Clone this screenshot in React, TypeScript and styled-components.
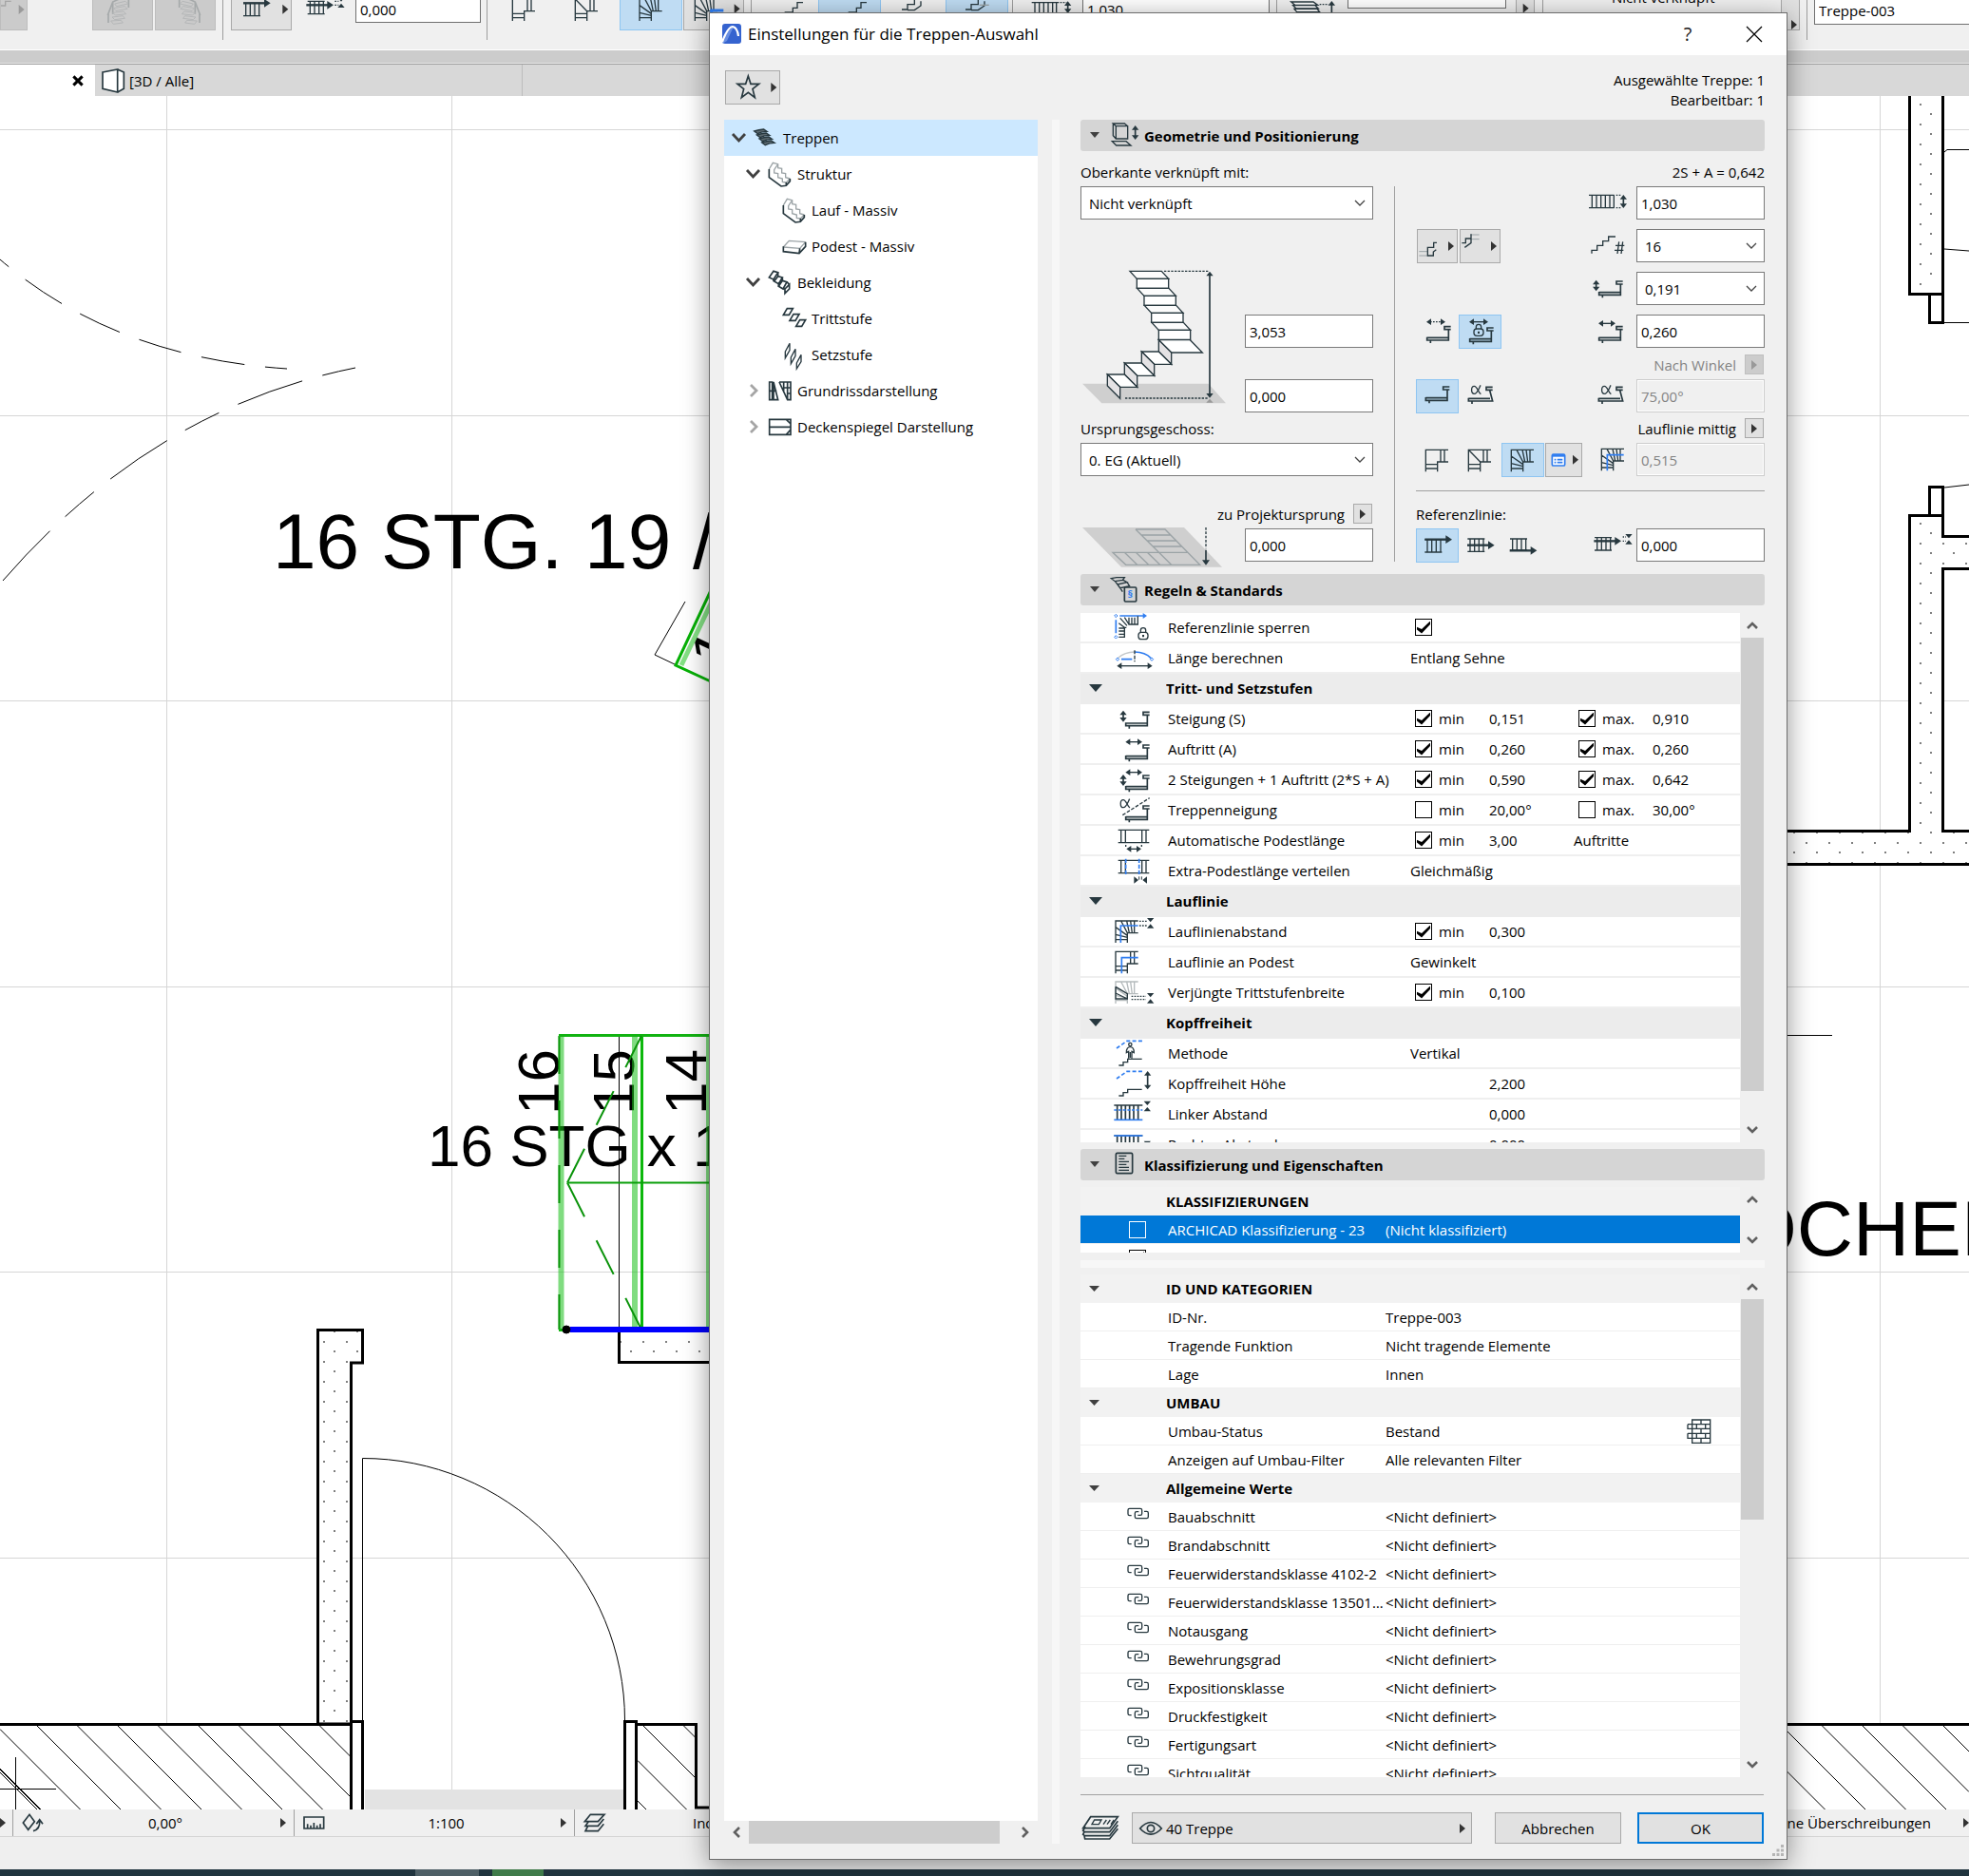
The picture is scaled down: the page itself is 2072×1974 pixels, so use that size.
import React from "react";
import styled, { createGlobalStyle, css } from "styled-components";

const INK = "#27383f";
const BLUE = "#2f7df0";
const GREY = "#9ba3a6";

const Global = createGlobalStyle`
  *, *::before, *::after { box-sizing: border-box; }
  body { margin: 0; overflow: hidden; }
  body, button, input, select, table {
    font-family: "Open Sans", "Noto Sans", sans-serif;
    font-size: 15px;
    line-height: 20px;
    color: #000;
  }
`;

/* ---------- drawing helpers ---------- */

type StrokeProps = { d: string; c?: string; w?: number; dash?: string; fill?: string };
const S = ({ d, c = INK, w = 4, dash, fill = "none" }: StrokeProps) => (
  <path d={d} stroke={c} strokeWidth={w} strokeDasharray={dash} fill={fill} />
);
const F = ({ d, c = INK }: { d: string; c?: string }) => <path d={d} fill={c} />;

const ArrowH = ({ x1, x2, y, dash }: { x1: number; x2: number; y: number; dash?: string }) => (
  <>
    <S d={`M${x1 + 12} ${y}H${x2 - 12}`} dash={dash} />
    <F d={`M${x1} ${y}l15-10v20zM${x2} ${y}l-15-10v20z`} />
  </>
);
const ArrowV = ({ x, y1, y2 }: { x: number; y1: number; y2: number }) => (
  <>
    <S d={`M${x} ${y1 + 10}V${y2 - 10}`} w={5} />
    <F d={`M${x} ${y1}l-11 14h22zM${x} ${y2}l-11-14h22z`} />
  </>
);
const Squeeze = ({ x, y }: { x: number; y: number }) => (
  <F d={`M${x - 11} ${y}h22l-11 13zM${x - 11} ${y + 32}h22l-11-13z`} />
);
const Step = ({ x, y }: { x: number; y: number }) => (
  <S w={5} d={`M${x} ${y}h66M${x} ${y - 2}v10h68v-34M${x + 75} ${y - 26}h-20v-9h20M${x + 11} ${y + 8}v9`} />
);
const SlantStep = ({ x, y }: { x: number; y: number }) => (
  <S w={5} d={`M${x} ${y}h68M${x} ${y - 2}v10h76l-9-34M${x + 76} ${y - 27}h-20v-9h20M${x + 11} ${y + 8}v9`} />
);
const Alpha = ({ x, y }: { x: number; y: number }) => (
  <S d={`M${x + 30} ${y}c-6 12-10 27-20 27c-11 0-11-24 0-24c10 0 12 20 21 25`} />
);
const Lock = ({ x, y }: { x: number; y: number }) => (
  <>
    <S d={`M${x + 7} ${y + 14}v-6a8 8 0 0 1 16 0v6`} />
    <rect x={x} y={y + 14} width={30} height={22} rx={9} fill="none" stroke={INK} strokeWidth={4} />
    <F d={`M${x + 12} ${y + 22}h6v7h-6z`} />
  </>
);
const Corner = ({ x, y, c = INK }: { x: number; y: number; c?: string }) => (
  <S
    c={c}
    d={`M${x} ${y + 69}V${y}H${x + 71}M${x + 37} ${y + 69}V${y + 38}H${x + 71}M${x} ${y + 46}h37M${x} ${y + 59}h37M${x + 47} ${y}v38M${x + 59} ${y}v38`}
  />
);
const Fan = ({ x, y, c = INK }: { x: number; y: number; c?: string }) => (
  <S
    c={c}
    d={`M${x} ${y + 69}V${y}H${x + 71}M${x + 37} ${y + 69}V${y + 38}H${x + 71}M${x} ${y + 59}h37M${x + 59} ${y}v38M${x + 37} ${y + 52}L${x} ${y + 43}M${x + 37} ${y + 46}L${x} ${y + 20}M${x + 37} ${y + 38}L${x + 17} ${y}M${x + 43} ${y + 38}L${x + 35} ${y}M${x + 52} ${y + 38}L${x + 47} ${y}`}
  />
);
const Ladder = ({ x, y, w = 54, h = 40 }: { x: number; y: number; w?: number; h?: number }) => (
  <S
    d={`M${x} ${y}h${w}M${x} ${y + h}h${w}M${x + 8} ${y}v${h}M${x + 22} ${y}v${h}M${x + 36} ${y}v${h}M${x + 50} ${y}v${h}`}
  />
);
const RefArrow = ({ x, y }: { x: number; y: number }) => (
  <>
    <S d={`M${x} ${y}h72`} w={7} />
    <F d={`M${x + 66} ${y - 13}l20 13l-20 13z`} />
  </>
);
const Right = ({ x, y, c = "#333" }: { x: number; y: number; c?: string }) => (
  <F c={c} d={`M${x} ${y - 15}l18 15l-18 15z`} />
);

/* Icons are drawn on a grid of three units to the pixel. */
const Glyph = styled.svg<{ $w: number; $h: number }>`
  display: block;
  flex: none;
  width: ${(p) => p.$w}px;
  height: ${(p) => p.$h}px;
  fill: none;
  overflow: visible;
`;
const Icon = ({ x, y, w, h, children }: { x: number; y: number; w: number; h: number; children: React.ReactNode }) => (
  <Glyph $w={w} $h={h} viewBox={`${x} ${y} ${w * 3} ${h * 3}`} aria-hidden="true">
    {children}
  </Glyph>
);

/* ---------- main window ---------- */

const Desktop = styled.div`
  position: relative;
  display: flex;
  flex-direction: column;
  height: 100vh;
  overflow: hidden;
  background: #f0f0f0;
`;
const Toolbar = styled.div`
  display: flex;
  align-items: flex-start;
  flex: none;
  height: 52px;
  overflow: hidden;
`;
const Slot = styled.div<{ $w: number; $gap?: number }>`
  flex: none;
  width: ${(p) => p.$w}px;
  margin-left: ${(p) => p.$gap ?? 0}px;
`;
const BarButton = styled.button<{ $w: number; $gap?: number; $tone?: "on" | "off" | "flat" }>`
  display: flex;
  flex: none;
  padding: 0;
  height: 32px;
  width: ${(p) => p.$w}px;
  margin-left: ${(p) => p.$gap ?? 0}px;
  border: 1px solid #a9a9a9;
  border-top: 0;
  background: #e1e1e1;
  ${(p) => p.$tone === "on" && css`background: #bfdcf3; border-color: #8ec5f2;`}
  ${(p) => p.$tone === "off" && css`background: #cbcbcb; border-color: #bdbdbd;`}
  ${(p) => p.$tone === "flat" && css`background: none; border-color: transparent;`}
`;
const Rule = styled.span<{ $gap: number }>`
  flex: none;
  width: 1px;
  height: 42px;
  margin-left: ${(p) => p.$gap}px;
  background: #9d9d9d;
`;
const BarField = styled.input<{ $w: number; $gap: number; $h: number }>`
  flex: none;
  height: ${(p) => p.$h}px;
  width: ${(p) => p.$w}px;
  margin-left: ${(p) => p.$gap}px;
  padding: 0 4px 4px;
  border: 1px solid #707070;
  border-top: 0;
  background: #fff;
`;
const BarText = styled.span<{ $gap: number }>`
  flex: none;
  margin-top: -13px;
  margin-left: ${(p) => p.$gap}px;
  width: 114px;
  white-space: nowrap;
`;
const Band = styled.div`
  flex: none;
  height: 15px;
  border-top: 1px solid #fff;
  border-bottom: 1px solid #e8e8e8;
  background: #ccc;
`;
const Tabs = styled.div`
  display: flex;
  flex: none;
  height: 34px;
  border-top: 1px solid #a0a0a0;
  background: #d8d8d8;
`;
const ActiveTab = styled.div`
  display: flex;
  align-items: center;
  justify-content: flex-end;
  width: 100px;
  padding-right: 12px;
  background: #fff;
`;
const TabClose = styled.button`
  display: flex;
  padding: 0;
  border: 0;
  background: none;
`;
const Tab = styled.button`
  display: flex;
  align-items: center;
  gap: 4px;
  width: 450px;
  padding: 0 0 0 7px;
  border: 0;
  border-right: 1px solid #bdbdbd;
  background: none;
`;
const Canvas = styled.main`
  flex: 1;
  min-height: 0;
  background: #fff;
`;
const Plan = styled.svg`
  display: block;
  width: 100%;
  height: 100%;
  font-family: "Liberation Sans", Arial, sans-serif;
`;
const StatusBar = styled.div`
  display: flex;
  flex: none;
  height: 29px;
  border-bottom: 1px solid #d4d4d4;
`;
const StatusCell = styled.button<{ $w: number }>`
  display: grid;
  grid-template-columns: 30px 1fr 12px;
  align-items: center;
  flex: none;
  width: ${(p) => p.$w}px;
  padding: 0 2px 0 9px;
  border: 0;
  border-left: 1px solid #a0a0a0;
  background: none;
  text-align: center;
`;
const StatusStart = styled.div`
  flex: none;
  width: 13px;
  padding-top: 9px;
`;
const StatusEnd = styled.div`
  display: flex;
  align-items: center;
  gap: 34px;
  margin-left: auto;
  white-space: nowrap;
`;
const Foot = styled.div`
  flex: none;
  height: 34px;
  background: #efefef;
`;
const Taskbar = styled.div`
  display: flex;
  flex: none;
  height: 7px;
  padding-left: 437px;
  background: #20343e;
`;
const Task = styled.span<{ $w: number; $c: string }>`
  width: ${(p) => p.$w}px;
  margin-right: 14px;
  background: ${(p) => p.$c};
`;

const hatch = (from: number, to: number, left: number, right: number) => {
  let d = "";
  for (let x = from; x < to; x += 42.5) {
    const a = Math.max(x, left);
    const b = Math.min(x + 88, right);
    if (b > a) d += `M${a} ${1816 + a - x}L${b} ${1816 + b - x}`;
  }
  return d;
};

const FloorPlan = () => (
  <Plan viewBox="0 101 2072 1803" preserveAspectRatio="xMinYMin slice" fill="none" stroke="#000">
    <defs>
      <pattern id="dots" width="24" height="42" patternUnits="userSpaceOnUse">
        <path d="M4 5h2M15 15h2M4 26h2M15 36h2" strokeWidth="1" stroke="#000" />
      </pattern>
    </defs>
    <g stroke="#d6d6d6">
      {[175.5, 475.5, 1978.5].map((x) => (
        <path key={x} d={`M${x} 101V1904`} />
      ))}
      {[136.5, 437.5, 737.5, 1038.5, 1338.5, 1639.5].map((y) => (
        <path key={y} d={`M0 ${y}H2072`} />
      ))}
    </g>
    <path d="M0 273Q120 376 302 388" strokeDasharray="46 22" strokeDashoffset="34" />
    <path d="M3 611Q160 430 374 387" strokeDasharray="72 22 40 22" />

    <g fill="#000" stroke="none">
      <text x="287" y="598" fontSize="82">16 STG. 19 /</text>
      <text x="450" y="1227" fontSize="62">16 STG x 1</text>
      <text x="1827" y="1321" fontSize="82">OCHEN</text>
      <g fontSize="62">
        <text transform="translate(588 1173) rotate(-90)">16</text>
        <text transform="translate(667 1173) rotate(-90)">15</text>
        <text transform="translate(743 1173) rotate(-90)">14</text>
        <text transform="translate(763 708) rotate(-65)">1</text>
      </g>
    </g>

    <path d="M721 633L689 689L712 700" />
    <path d="M717 700L750 631" stroke="#84e084" strokeWidth="5" />
    <path d="M750 617L711 700L750 718" stroke="#06b106" strokeWidth="3" />

    <path d="M651.5 1090V1400" />
    <path d="M590.5 1090V1399M668 1090V1399M746 1090V1399" stroke="#18c018" strokeOpacity=".55" strokeWidth="6" />
    <path d="M588.5 1090V1399" stroke="#0a930a" strokeWidth="2" strokeDasharray="40 28" />
    <path d="M675.5 1089V1398" stroke="#0cb80c" strokeWidth="3" />
    <path d="M588 1089.5H750M588 1399.5H600" stroke="#12b312" strokeWidth="3" />
    <path d="M597 1244.500L675 1090M597 1244.500L675 1399" stroke="#0a930a" strokeWidth="2" strokeDasharray="40 28" />
    <path d="M597 1244.500H750" stroke="#0a9f0a" strokeWidth="2" />
    <rect x="652" y="1402" width="100" height="31" fill="url(#dots)" stroke="none" />
    <path d="M651.500 1400V1433.500H750" strokeWidth="3" />
    <path d="M600 1399H750" stroke="#00f" strokeWidth="6" />
    <circle cx="596" cy="1399" r="4" fill="#000" />

    <path d="M334.500 1814V1399.500H381.500V1434H369.500V1814Z" fill="#fff" strokeWidth="3" />
    <path d="M334.500 1814V1399.500H381.500V1434H369.500V1814Z" fill="url(#dots)" stroke="none" />
    <path d="M381.500 1810V1534.500A276 276 0 0 1 657.500 1810" />
    <rect x="384" y="1883" width="273" height="21" fill="#e3e3e3" stroke="none" />
    <path d="M0 1815H370V1910H0Z" fill="#fff" stroke="none" />
    <path d="M0 1814.500H370M670 1814.500H732.500V1902H750" strokeWidth="3" />
    <path d={hatch(-46, 370, 0, 369) + hatch(592, 733, 671, 732)} />
    <path d="M0 1861L43 1904M0 1865L39 1904" />
    <path d="M369.500 1904V1811.500H381.500V1904M657.500 1904V1811.500H669.500V1904" strokeWidth="3" />
    <path d="M16.500 1849V1904M0 1882.500H59" />

    <path d="M2009.500 90V309.500H2044.500V90Z" fill="#fff" strokeWidth="3" />
    <path d="M2009.500 90V309.500H2044.500V90Z" fill="url(#dots)" stroke="none" />
    <path d="M2030.500 310V339.500H2044.500V310M2030.500 542V512.500H2044.500V564.500H2080" strokeWidth="3" />
    <path d="M2046 160L2049 157.500H2072M2046 262L2072 264M2046 339.500H2072M2046 513L2072 510" />
    <path
      d="M2009.500 874.500V542.500H2044.500V564.500H2090V598.500H2044.500V874.500H2090V909.500H1870V874.500Z"
      fill="#fff"
      strokeWidth="3"
    />
    <path
      d="M2009.500 874.500V542.500H2044.500V564.500H2090V598.500H2044.500V874.500H2090V909.500H1870V874.500Z"
      fill="url(#dots)"
      stroke="none"
    />
    <path d="M1870 1089.500H1928" />
    <path d="M1870 1815H2072V1910H1870Z" fill="#fff" stroke="none" />
    <path d="M1870 1814.500H2072" strokeWidth="3" />
    <path d={hatch(1790, 2072, 1870, 2072)} />
  </Plan>
);

const Shell = () => (
  <>
    <Toolbar>
      <BarButton $w={29} $tone="off" aria-label="Profil" disabled>
        <Icon x={0} y={0} w={28} h={31}>
          <S d="M0 18H14V4H32" c="#a5a5a5" />
          <Right x={56} y={30} c="#9a9a9a" />
        </Icon>
      </BarButton>
      {[0, 1].map((i) => (
        <BarButton key={i} $w={64} $gap={i ? 2 : 68} $tone="off" aria-label={`Geländer ${i + 1}`} disabled>
          <Icon x={0} y={0} w={62} h={31}>
            <g transform={i ? "translate(186 0) scale(-1 1)" : undefined}>
              <S c="#a5a9aa" d="M46 48L62 6L110-16M48 44v28M62 8v36M112-10v34" w={5} />
              <S c="#b5b7b8" w={3} d="M68 12l34-8l8 8l-36 8zM64 26l36-6l8 8l-36 6zM62 40l34-4l8 8l-34 4zM60 54l34-4l6 8l-32 4zM56 66l32-2l6 8l-30 4z" />
            </g>
          </Icon>
        </BarButton>
      ))}
      <Rule $gap={7} />
      <BarButton $w={64} $gap={8} aria-label="Referenzlinie">
        <Icon x={0} y={0} w={62} h={31}>
          <Ladder x={36} y={10} />
          <RefArrow x={36} y={10} />
          <Right x={160} y={29} />
        </Icon>
      </BarButton>
      <Slot $w={44} $gap={14}>
        <Icon x={0} y={0} w={42} h={31}>
          <Ladder x={8} y={4} />
          <RefArrow x={4} y={16} />
          <S d="M94 4H106M94 16H106" dash="5 4" />
          <Squeeze x={114} y={-8} />
        </Icon>
      </Slot>
      <BarField $w={132} $gap={9} $h={24} aria-label="Versatz" defaultValue="0,000" />
      <Rule $gap={6} />
      <Slot $w={26} $gap={25}>
        <Icon x={0} y={0} w={26} h={31}><Corner x={4} y={-3} /></Icon>
      </Slot>
      <Slot $w={26} $gap={40}>
        <Icon x={0} y={0} w={26} h={31}>
          <Corner x={4} y={-3} />
          <S d="M4-3L41 35" />
        </Icon>
      </Slot>
      <BarButton $w={66} $gap={22} $tone="on" aria-label="Wendel">
        <Icon x={0} y={0} w={64} h={31}><Fan x={60} y={-3} /></Icon>
      </BarButton>
      <BarButton $w={64} $gap={1} aria-label="Wendel Optionen">
        <Icon x={0} y={0} w={62} h={31}>
          <Fan x={34} y={-3} />
          <S c={BLUE} w={9} d="M86 66V33H124" />
          <Right x={158} y={28} />
        </Icon>
      </BarButton>
      <Rule $gap={7} />
      {[0, 1, 2, 3].map((i) => (
        <BarButton key={i} $w={66} $gap={i === 0 ? 3 : 1} $tone={i % 2 ? "on" : "flat"} aria-label={`Stufe ${i + 1}`}>
          <Icon x={0} y={0} w={64} h={31}>
            {i < 2 ? (
              <S d="M92 39H118V25H132V8H150" />
            ) : (
              <>
                <S d="M60 30H78V14H100V-4M78 32H100L120 18V4" />
                {i === 3 && <S c={GREY} d="M104 16H134" />}
              </>
            )}
          </Icon>
        </BarButton>
      ))}
      <Rule $gap={4} />
      <Slot $w={44} $gap={19}>
        <Icon x={0} y={0} w={42} h={31}>
          <S d="M2 8H88M12 8V48M26 8V48M40 8V48M54 8V48M68 8V48M80 8V48" />
          <S d="M92 8H112" dash="5 4" />
          <ArrowV x={116} y1={4} y2={42} />
        </Icon>
      </Slot>
      <BarField $w={197} $gap={10} $h={24} aria-label="Laufbreite" defaultValue="1,030" />
      <Rule $gap={7} />
      <Slot $w={50} $gap={14}>
        <Icon x={0} y={0} w={50} h={31}>
          <S fill="#fff" d="M2 6h70l14 10H14zM8 17h70l10 10H18zM12 28h72l8 10H20z" />
          <S d="M92 14H120" dash="5 4" />
          <S w={5} d="M130 14V50" />
          <F d="M130 3l-11 14h22z" />
        </Icon>
      </Slot>
      <BarField $w={167} $gap={10} $h={9} aria-label="Höhe" />
      <BarButton $w={20} $gap={10} aria-label="Höhe wählen">
        <Icon x={0} y={0} w={18} h={31}><Right x={20} y={26} /></Icon>
      </BarButton>
      <Rule $gap={8} />
      <BarText $gap={72}>Nicht verknüpft</BarText>
      <BarButton $w={20} $gap={64} aria-label="Verknüpfung wählen">
        <Icon x={0} y={0} w={18} h={31}><Right x={30} y={78} /></Icon>
      </BarButton>
      <Rule $gap={7} />
      <BarField $w={200} $gap={7} $h={26} aria-label="ID" defaultValue="Treppe-003" />
    </Toolbar>
    <Band />
    <Tabs>
      <ActiveTab>
        <TabClose aria-label="Tab schließen">
          <Icon x={0} y={0} w={12} h={12}><S d="M4 4L32 32M32 4L4 32" c="#000" w={9} /></Icon>
        </TabClose>
      </ActiveTab>
      <Tab>
        <Icon x={0} y={0} w={25} h={26}>
          <S d="M3 12L50 3L50 75L3 64ZM50 3L70 12V64L50 75" w={5} fill="#fff" />
        </Icon>
        [3D / Alle]
      </Tab>
    </Tabs>
    <Canvas><FloorPlan /></Canvas>
    <StatusBar>
      <StatusStart>
        <Icon x={0} y={0} w={6} h={10}><Right x={0} y={15} /></Icon>
      </StatusStart>
      <StatusCell $w={296}>
        <Icon x={0} y={0} w={24} h={20}>
          <S d="M4 30L24 4L40 26L20 52ZM36 56Q58 50 56 24M46 34L56 20L66 34" w={5} />
        </Icon>
        <span>0,00°</span>
        <Icon x={0} y={0} w={8} h={10}><Right x={0} y={15} /></Icon>
      </StatusCell>
      <StatusCell $w={295}>
        <Icon x={0} y={0} w={24} h={16}>
          <S d="M3 6H65V42H3ZM14 42V28M24 42V32M34 42V24M44 42V32M54 42V28" w={5} />
        </Icon>
        <span>1:100</span>
        <Icon x={0} y={0} w={8} h={10}><Right x={0} y={15} /></Icon>
      </StatusCell>
      <StatusCell $w={296}>
        <Icon x={0} y={0} w={24} h={20}>
          <S d="M22 4H66L46 26H4ZM16 26L6 40H46L64 18M14 40L6 56H46L64 34" w={5} />
        </Icon>
        <span>Individuell</span>
        <Icon x={0} y={0} w={8} h={10}><Right x={0} y={15} /></Icon>
      </StatusCell>
      <StatusEnd>
        Keine Überschreibungen
        <Icon x={0} y={0} w={6} h={10}><Right x={0} y={15} /></Icon>
      </StatusEnd>
    </StatusBar>
    <Foot />
    <Taskbar>
      <Task $w={67} $c="#4e5f66" />
      <Task $w={54} $c="#3f7b4a" />
    </Taskbar>
  </>
);

/* ---------- dialog ---------- */

const Dialog = styled.section`
  position: absolute;
  top: 13px;
  bottom: 17px;
  left: 746px;
  width: 1135px;
  display: flex;
  flex-direction: column;
  border: 1px solid #6d6d6d;
  background: #f0f0f0;
  box-shadow: 0 6px 26px rgba(0, 0, 0, 0.42);
`;
const TitleBar = styled.header`
  display: flex;
  align-items: center;
  flex: none;
  height: 44px;
  padding: 0 19px 0 12px;
  background: #fff;
`;
const Title = styled.h1`
  flex: 1;
  margin: 0 0 0 6px;
  font-size: 17px;
  font-weight: 400;
`;
const TitleButton = styled.button`
  display: flex;
  align-items: center;
  justify-content: center;
  width: 30px;
  height: 30px;
  margin-left: 40px;
  padding: 0;
  border: 0;
  background: none;
  font-size: 20px;
  color: #222;
`;
const DialogTop = styled.div`
  display: flex;
  justify-content: space-between;
  flex: none;
  height: 68px;
  padding: 16px 23px 0 16px;
`;
const FavButton = styled.button`
  width: 58px;
  height: 36px;
  padding: 0;
  border: 1px solid #a9a9a9;
  background: #e1e1e1;
`;
const Counts = styled.p`
  margin: 0;
  text-align: right;
  line-height: 21px;
`;
const Body = styled.div`
  display: flex;
  flex: 1;
  min-height: 0;
  padding: 0 23px 16px 15px;
`;
const TreePane = styled.nav`
  display: flex;
  flex-direction: column;
  flex: none;
  width: 330px;
`;
const Tree = styled.ul`
  flex: 1;
  margin: 0;
  padding: 0;
  background: #fff;
  list-style: none;
`;
const TreeRow = styled.li<{ $level: number; $on?: boolean }>`
  display: flex;
  align-items: center;
  height: 38px;
  padding-left: ${(p) => p.$level * 15 + 8}px;
  background: ${(p) => (p.$on ? "#cce8ff" : "#fff")};
`;
const Caret = styled.span`
  display: flex;
  flex: none;
  width: 23px;
`;
const TreeLabel = styled.span`
  margin-left: 4px;
`;
const HScroll = styled.div`
  display: flex;
  align-items: center;
  height: 24px;
`;
const HThumb = styled.span`
  width: 264px;
  height: 24px;
  margin-right: auto;
  background: #cdcdcd;
`;
const ScrollButton = styled.button`
  display: flex;
  align-items: center;
  justify-content: center;
  flex: none;
  width: 100%;
  height: 26px;
  padding: 0;
  border: 0;
  background: none;
`;
const HScrollButton = styled(ScrollButton)`
  width: 26px;
`;
const Splitter = styled.div`
  flex: none;
  width: 8px;
  margin: 0 22px 0 15px;
  background: #f7f7f7;
`;
const Panel = styled.div`
  display: flex;
  flex-direction: column;
  flex: 1;
  min-width: 0;
`;
const Section = styled.button<{ $top?: number }>`
  display: flex;
  align-items: center;
  flex: none;
  height: 33px;
  margin-top: ${(p) => p.$top ?? 0}px;
  padding: 0;
  border: 0;
  border-radius: 3px;
  background: #d5d5d5;
  font-weight: 700;
  text-align: left;
`;

/* geometry */
const Geometry = styled.div`
  display: flex;
  flex: none;
  padding-bottom: 13px;
`;
const LeftCol = styled.div`
  display: flex;
  flex-direction: column;
  width: 308px;
`;
const Divider = styled.div`
  width: 1px;
  margin: 37px 22px 0;
  background: #a0a0a0;
`;
const RightCol = styled.div`
  display: flex;
  flex-direction: column;
  flex: 1;
`;
const Caption = styled.div<{ $h: number; $end?: boolean }>`
  display: flex;
  align-items: flex-end;
  flex: none;
  justify-content: ${(p) => (p.$end ? "flex-end" : "flex-start")};
  gap: 9px;
  height: ${(p) => p.$h}px;
  padding-bottom: 5px;
`;
const Muted = styled.span<{ $off?: boolean }>`
  color: ${(p) => (p.$off ? "#838383" : "#000")};
`;
const MiniButton = styled.button`
  display: flex;
  align-items: center;
  justify-content: center;
  width: 20px;
  height: 21px;
  margin-right: 1px;
  padding: 0;
  border: 1px solid #a9a9a9;
  background: #e1e1e1;
  &:disabled { background: #ccc; border-color: #bfbfbf; }
`;
const TextField = styled.input`
  width: 135px;
  height: 35px;
  padding: 0 4px;
  border: 1px solid #7a7a7a;
  background: #fff;
  &:disabled { background: #f0f0f0; color: #838383; border-color: #ccc; box-shadow: inset 0 0 0 1px #fff; }
`;
const SelectBox = styled.div<{ $w: number }>`
  display: grid;
  flex: none;
  align-items: center;
  width: ${(p) => p.$w}px;
  height: 35px;
  border: 1px solid #7a7a7a;
  background: #fff;
  & > * { grid-area: 1 / 1; }
  & > svg { justify-self: end; margin-right: 6px; pointer-events: none; }
`;
const NativeSelect = styled.select`
  width: 100%;
  height: 33px;
  padding: 0 28px 0 8px;
  border: 0;
  background: none;
  appearance: none;
`;
const Figure = styled.div<{ $gap: number; $h: number }>`
  display: flex;
  align-items: flex-end;
  justify-content: space-between;
  flex: none;
  margin-top: ${(p) => p.$gap}px;
  height: ${(p) => p.$h}px;
`;
const FieldStack = styled.div`
  display: flex;
  flex-direction: column;
  gap: 33px;
`;
const FieldRow = styled.div<{ $gap?: number }>`
  display: flex;
  align-items: center;
  flex: none;
  height: 35px;
  margin-top: ${(p) => p.$gap ?? 0}px;
`;
const Tools = styled.div`
  display: flex;
  flex: 1;
  align-items: center;
`;
const Tool = styled.button<{ $on?: boolean }>`
  display: flex;
  align-items: center;
  justify-content: center;
  width: 45px;
  height: 36px;
  padding: 0;
  border: 0;
  background: ${(p) => (p.$on ? "#bfdcf3" : "none")};
  box-shadow: ${(p) => (p.$on ? "inset 0 0 0 1px #8ec5f2" : "none")};
`;
const FlyTool = styled.button<{ $w: number }>`
  display: flex;
  justify-content: center;
  width: ${(p) => p.$w}px;
  height: 36px;
  margin: 0 1px;
  padding: 0;
  border: 0;
  background: #e1e1e1;
  box-shadow: inset 0 0 0 1px #a9a9a9;
`;
const FieldIcon = styled.span`
  flex: none;
  margin-right: 4px;
`;
const Line = styled.hr`
  flex: none;
  width: 100%;
  height: 1px;
  margin: 0;
  border: 0;
  background: #a0a0a0;
`;

const Chevron = () => (
  <Glyph $w={14} $h={9} viewBox="0 0 14 9" aria-hidden="true">
    <path d="M2 2L7 7L12 2" stroke="#444" strokeWidth="1.300" />
  </Glyph>
);
const Select = ({ id, label, w, value }: { id?: string; label?: string; w: number; value: string }) => (
  <SelectBox $w={w}>
    <NativeSelect id={id} aria-label={label} defaultValue={value}>
      <option>{value}</option>
    </NativeSelect>
    <Chevron />
  </SelectBox>
);
const Mini = ({ label, off }: { label: string; off?: boolean }) => (
  <MiniButton aria-label={label} disabled={off}>
    <Glyph $w={6} $h={10} viewBox="0 0 6 10">
      <path d="M0 0L6 5L0 10Z" fill={off ? "#999" : "#333"} />
    </Glyph>
  </MiniButton>
);

const StairFigure = () => {
  const top = [0, 1, 2, 3].map((i) => {
    const x = 207 + i * 23;
    const y = 496 + i * 54;
    return (
      <React.Fragment key={i}>
        <S fill="#fcfcfc" d={`M${x} ${y}h100l22 24h-100z`} />
        <S fill="#fff" d={`M${x + 22} ${y + 24}h100v30h-100z`} />
      </React.Fragment>
    );
  });
  const low = [0, 1, 2].map((i) => {
    const x = 244 - i * 54;
    const y = 750 + i * 36;
    return (
      <React.Fragment key={i}>
        <S fill="#fff" d={`M${x} ${y}h54l40 40h-54z`} />
        <S fill="#e4e2e4" d={`M${x} ${y}l40 40v36l-40-40z`} />
      </React.Fragment>
    );
  });
  return (
    <Icon x={51} y={480} w={155} h={154}>
      <F c="#cfcfcf" d="M57 851H455L510 913H118Z" />
      {top}
      <S fill="#fff" d="M298 713H397L436 753H338Z" />
      <S fill="#e4e2e4" d="M298 713L338 753V790L298 750Z" />
      {low}
      <S d="M315 496H455M192 897H455" dash="7 4" />
      <S d="M459 505V888" w={5} />
      <F d="M448 511L459 497L470 511ZM448 882L459 896L470 882Z" />
      <F c="#999" d="M448 911L459 899L470 911Z" />
    </Icon>
  );
};
const GroundFigure = () => (
  <Icon x={51} y={1308} w={155} h={35}>
    <F c="#cfcfcf" d="M57 1305H378L498 1430H180Z" />
    <S
      c={GREY}
      d="M225 1311H318L428 1423H194L153 1384H388M225 1311L338 1423M190 1384L230 1423M226 1384L266 1423M262 1384L302 1423M242 1329H336M261 1347H354M279 1365H371"
    />
    <S d="M447 1305V1372" dash="8 5" />
    <S d="M447 1376V1412" w={5} />
    <F d="M435 1408H459L447 1424Z" />
  </Icon>
);

const GeometryPanel = () => (
  <Geometry>
    <LeftCol>
      <Caption as="label" $h={37} htmlFor="top-link">Oberkante verknüpft mit:</Caption>
      <Select id="top-link" w={308} value="Nicht verknüpft" />
      <Figure $gap={49} $h={154}>
        <StairFigure />
        <FieldStack>
          <TextField aria-label="Treppenhöhe" defaultValue="3,053" />
          <TextField aria-label="Höhe zum Ursprungsgeschoss" defaultValue="0,000" />
        </FieldStack>
      </Figure>
      <Caption as="label" $h={32} htmlFor="home-story">Ursprungsgeschoss:</Caption>
      <Select id="home-story" w={308} value="0. EG (Aktuell)" />
      <Caption $h={55} $end>
        <label htmlFor="origin">zu Projektursprung</label>
        <Mini label="Bezug wählen" />
      </Caption>
      <Figure $gap={0} $h={35}>
        <GroundFigure />
        <TextField id="origin" defaultValue="0,000" />
      </Figure>
    </LeftCol>
    <Divider />
    <RightCol>
      <Caption $h={37} $end>2S + A = 0,642</Caption>
      <FieldRow>
        <Tools />
        <FieldIcon>
          <Icon x={690} y={228} w={48} h={35}>
            <S d="M696 256H776M696 296H776M706 256V296M720 256V296M734 256V296M748 256V296M762 256V296M775 256V296" />
            <S d="M782 256H800M782 296H800" dash="5 4" />
            <ArrowV x={805} y1={255} y2={297} />
          </Icon>
        </FieldIcon>
        <TextField aria-label="Laufbreite" defaultValue="1,030" />
      </FieldRow>
      <FieldRow $gap={10}>
        <Tools>
          <FlyTool $w={43} aria-label="Unterer Anschluss">
            <Icon x={153} y={363} w={43} h={35}>
              <S c={GREY} d="M160 434H188M160 447H188" w={3} />
              <S d="M216 406H206V421H187V447H205V435L214 428" />
              <Right x={252} y={417} />
            </Icon>
          </FlyTool>
          <FlyTool $w={43} aria-label="Oberer Anschluss">
            <Icon x={288} y={363} w={43} h={35}>
              <S c={GREY} d="M322 381H350M322 395H350" w={3} />
              <S d="M295 407H307V393H324V379M324 393V407L304 421" />
              <Right x={387} y={417} />
            </Icon>
          </FlyTool>
        </Tools>
        <FieldIcon>
          <Icon x={690} y={363} w={48} h={35}>
            <S d="M705 440V430H722V415H740V401H758V387H780M786 441L791 403M798 441L803 403M780 415H808M777 430H805" />
          </Icon>
        </FieldIcon>
        <Select w={135} label="Anzahl Steigungen" value="16" />
      </FieldRow>
      <FieldRow $gap={10}>
        <Tools />
        <FieldIcon>
          <Icon x={690} y={498} w={48} h={35}>
            <ArrowV x={719} y1={524} y2={559} />
            <Step x={728} y={563} />
          </Icon>
        </FieldIcon>
        <Select w={135} label="Steigung" value="0,191" />
      </FieldRow>
      <FieldRow $gap={10}>
        <Tools>
          <Tool aria-label="Auftritt frei">
            <Icon x={150} y={633} w={45} h={35}>
              <ArrowH x1={183} x2={243} y={656} dash="5 4" />
              <Step x={185} y={706} />
            </Icon>
          </Tool>
          <Tool $on aria-label="Auftritt fixiert">
            <Icon x={285} y={633} w={45} h={35}>
              <ArrowH x1={318} x2={378} y={656} />
              <Step x={320} y={710} />
              <Lock x={333} y={664} />
            </Icon>
          </Tool>
        </Tools>
        <FieldIcon>
          <Icon x={690} y={633} w={48} h={35}>
            <ArrowH x1={726} x2={780} y={661} />
            <Step x={728} y={706} />
          </Icon>
        </FieldIcon>
        <TextField aria-label="Auftritt" defaultValue="0,260" />
      </FieldRow>
      <Caption $h={33} $end>
        <Muted $off>Nach Winkel</Muted>
        <Mini label="Nach Winkel" off />
      </Caption>
      <FieldRow>
        <Tools>
          <Tool $on aria-label="Setzstufe gerade">
            <Icon x={150} y={838} w={45} h={35}>
              <Step x={181} y={897} />
            </Icon>
          </Tool>
          <Tool aria-label="Setzstufe schräg">
            <Icon x={285} y={838} w={45} h={35}>
              <SlantStep x={316} y={899} />
              <Alpha x={324} y={857} />
            </Icon>
          </Tool>
        </Tools>
        <FieldIcon>
          <Icon x={690} y={838} w={48} h={35}>
            <SlantStep x={727} y={899} />
            <Alpha x={735} y={857} />
          </Icon>
        </FieldIcon>
        <TextField aria-label="Winkel" defaultValue="75,00°" disabled />
      </FieldRow>
      <Caption $h={32} $end>
        <Muted>Lauflinie mittig</Muted>
        <Mini label="Lauflinie mittig" />
      </Caption>
      <FieldRow>
        <Tools>
          <Tool aria-label="Podest">
            <Icon x={150} y={1038} w={45} h={35}><Corner x={181} y={1060} /></Icon>
          </Tool>
          <Tool aria-label="Geteiltes Podest">
            <Icon x={285} y={1038} w={45} h={35}>
              <Corner x={316} y={1060} />
              <S d="M316 1060L353 1098" />
            </Icon>
          </Tool>
          <Tool $on aria-label="Wendelstufen">
            <Icon x={420} y={1038} w={45} h={35}><Fan x={451} y={1060} /></Icon>
          </Tool>
          <FlyTool $w={39} aria-label="Wendelung Optionen">
            <Icon x={561} y={1038} w={39} h={35}>
              <rect x={583} y={1074} width={40} height={36} rx={4} stroke={BLUE} strokeWidth={5} fill="#fff" />
              <S c={BLUE} w={8} d="M583 1078H623" />
              <S c={BLUE} d="M590 1091H595M599 1091H616M590 1100H595M599 1100H616" w={5} />
              <Right x={648} y={1091} />
            </Icon>
          </FlyTool>
        </Tools>
        <FieldIcon>
          <Icon x={690} y={1038} w={48} h={35}>
            <Fan x={736} y={1057} />
            <S c={BLUE} d="M754 1126V1076H806" w={5} />
          </Icon>
        </FieldIcon>
        <TextField aria-label="Lauflinienabstand" defaultValue="0,515" disabled />
      </FieldRow>
      <Caption $h={15}>{null}</Caption>
      <Line />
      <Caption $h={39}>Referenzlinie:</Caption>
      <FieldRow>
        <Tools>
          <Tool $on aria-label="Referenzlinie links">
            <Icon x={150} y={1308} w={45} h={35}>
              <Ladder x={178} y={1343} />
              <RefArrow x={178} y={1343} />
            </Icon>
          </Tool>
          <Tool aria-label="Referenzlinie mittig">
            <Icon x={285} y={1308} w={45} h={35}>
              <Ladder x={313} y={1341} />
              <RefArrow x={312} y={1361} />
            </Icon>
          </Tool>
          <Tool aria-label="Referenzlinie rechts">
            <Icon x={420} y={1308} w={45} h={35}>
              <Ladder x={447} y={1341} h={36} />
              <RefArrow x={446} y={1378} />
            </Icon>
          </Tool>
        </Tools>
        <FieldIcon>
          <Icon x={690} y={1308} w={48} h={35}>
            <Ladder x={714} y={1337} />
            <RefArrow x={712} y={1348} />
            <S d="M803 1335H812M803 1348H812" dash="4 3" />
            <Squeeze x={822} y={1326} />
          </Icon>
        </FieldIcon>
        <TextField aria-label="Versatz der Referenzlinie" defaultValue="0,000" />
      </FieldRow>
    </RightCol>
  </Geometry>
);

/* lists */
const ListBox = styled.div<{ $h?: number; $top: number }>`
  display: flex;
  min-height: 0;
  margin-top: ${(p) => p.$top}px;
  ${(p) => (p.$h ? css`flex: none; height: ${p.$h}px;` : css`flex: 1;`)}
`;
const Clip = styled.div`
  flex: 1;
  min-width: 0;
  overflow: hidden;
  background: #fff;
`;
const VScroll = styled.div`
  display: flex;
  flex-direction: column;
  justify-content: space-between;
  flex: none;
  width: 24px;
  margin-left: 1px;
  margin-right: 1px;
`;
const VThumb = styled.span<{ $h: number }>`
  width: 24px;
  height: ${(p) => p.$h}px;
  margin-bottom: auto;
  background: #cdcdcd;
`;
const Grid = styled.table<{ $row: number; $line: number }>`
  width: 100%;
  table-layout: fixed;
  border-spacing: 0;
  td, th {
    height: ${(p) => p.$row}px;
    padding: 0 0 0 2px;
    border-bottom: ${(p) => p.$line}px solid #efefef;
    text-align: left;
    font-weight: 400;
    white-space: nowrap;
    overflow: hidden;
    text-overflow: ellipsis;
  }
`;
const Group = styled.tr<{ $c: string }>`
  background: ${(p) => p.$c};
  && > td, && > th { border-bottom-color: ${(p) => p.$c}; padding-left: 0; font-weight: 700; }
`;
const Toggle = styled.button`
  display: flex;
  padding: 0;
  border: 0;
  background: none;
  margin-left: 9px;
`;
const Cell = styled.div`
  display: flex;
  align-items: center;
`;
const IconSpot = styled.div<{ $left: number }>`
  margin-left: ${(p) => p.$left}px;
`;
const Check = styled.input<{ $light?: boolean }>`
  display: grid;
  place-items: center;
  flex: none;
  width: 18px;
  height: 18px;
  margin: 0;
  border: 1px solid ${(p) => (p.$light ? "#fff" : "#000")};
  background: ${(p) => (p.$light ? "none" : "#fff")};
  appearance: none;
  &:checked::before {
    content: "";
    width: 14px;
    height: 13px;
    background: #000;
    clip-path: polygon(0 48%, 0 70%, 36% 100%, 100% 26%, 100% 0, 36% 66%);
  }
`;
const Limit = styled.label`
  display: flex;
  align-items: center;
  gap: 7px;
  margin-left: 5px;
`;
const LimitText = styled.span`
  width: 53px;
`;
const Indent = styled.span`
  margin-left: 83px;
`;

const Up = () => (
  <Glyph $w={12} $h={10} viewBox="0 0 12 10"><path d="M1 8L6 3L11 8" stroke="#606060" strokeWidth="2.600" /></Glyph>
);
const Down = () => (
  <Glyph $w={12} $h={10} viewBox="0 0 12 10"><path d="M1 2L6 7L11 2" stroke="#606060" strokeWidth="2.600" /></Glyph>
);
const Scroll = ({ thumb }: { thumb?: number }) => (
  <VScroll>
    <ScrollButton aria-label="Nach oben"><Up /></ScrollButton>
    {thumb ? <VThumb $h={thumb} /> : null}
    <ScrollButton aria-label="Nach unten"><Down /></ScrollButton>
  </VScroll>
);
const Triangle = ({ big }: { big?: boolean }) => (
  <Glyph $w={big ? 14 : 11} $h={big ? 8 : 6} viewBox="0 0 14 8" preserveAspectRatio="none">
    <path d="M0 0H14L7 8Z" fill={big ? INK : "#404040"} />
  </Glyph>
);

type Lim = { on: boolean; value: string };
type RuleRow =
  | { group: string }
  | { icon: React.ReactNode; label: string; text?: string; check?: boolean; min?: Lim; max?: Lim; unit?: string; value?: string };

const Landing = () => (
  <S d="M170 13H268M170 53H268M179 13V53M193 13V53M245 13V53M258 13V53" />
);
const Stairs = () => <S d="M172 84H186V74H200V64H245" />;
const HeadLine = () => <S c={BLUE} w={5} d="M165 30L198 7H248" dash="12 7" />;
const Rungs = () => (
  <S w={5} d="M157 18H247M167 18V64M180 18V64M193 18V64M206 18V64M219 18V64M233 18V64" />
);

const rules: RuleRow[] = [
  {
    label: "Referenzlinie sperren",
    check: true,
    icon: (
      <>
        <S c={BLUE} w={5} d="M175 9H250M163 22V64" />
        <F c={BLUE} d="M248 0L261 9L248 18Z" />
        <S c={BLUE} w={3} d="M163 4L168 9L163 14L158 9ZM163 71L168 76L163 81L158 76Z" />
        <S d="M204 14V36H234M213 14V36M222 14V36M232 10V36M190 78V46H196M172 76H190M172 67H190M172 57H190M172 48H190M172 32L190 46M176 16L198 40M190 14L204 36" />
        <Lock x={234} y={47} />
      </>
    ),
  },
  {
    label: "Länge berechnen",
    text: "Entlang Sehne",
    icon: (
      <>
        <S c="#c4c8ca" d="M170 46Q190 27 222 27" />
        <S c={BLUE} w={5} d="M222 27Q256 28 273 46M180 50H214" />
        <S c={BLUE} w={3} d="M168 45L173 50L168 55L163 50ZM276 45L281 50L276 55L271 50Z" />
        <S d="M222 22V58" dash="12 4" />
        <ArrowH x1={166} x2={278} y={71} />
      </>
    ),
  },
  { group: "Tritt- und Setzstufen" },
  {
    label: "Steigung (S)",
    min: { on: true, value: "0,151" },
    max: { on: true, value: "0,910" },
    icon: <><ArrowV x={186} y1={20} y2={56} /><Step x={194} y={60} /></>,
  },
  {
    label: "Auftritt (A)",
    min: { on: true, value: "0,260" },
    max: { on: true, value: "0,260" },
    icon: <><ArrowH x1={193} x2={246} y={23} /><Step x={194} y={68} /></>,
  },
  {
    label: "2 Steigungen + 1 Auftritt (2*S + A)",
    min: { on: true, value: "0,590" },
    max: { on: true, value: "0,642" },
    icon: <><ArrowH x1={193} x2={246} y={23} /><ArrowV x={186} y1={30} y2={66} /><Step x={194} y={68} /></>,
  },
  {
    label: "Treppenneigung",
    min: { on: false, value: "20,00°" },
    max: { on: false, value: "30,00°" },
    icon: <><Alpha x={176} y={11} /><S d="M184 62L269 8" dash="11 5" /><Step x={194} y={68} /></>,
  },
  {
    label: "Automatische Podestlänge",
    min: { on: true, value: "3,00" },
    unit: "Auftritte",
    icon: <><Landing /><S d="M194 60V66M244 60V66" /><ArrowH x1={196} x2={243} y={73} /></>,
  },
  {
    label: "Extra-Podestlänge verteilen",
    text: "Gleichmäßig",
    icon: (
      <>
        <Landing />
        <S c={BLUE} w={5} d="M194 8V58M236 8V58" dash="13 5" />
        <F d="M220 64L234 75L220 86ZM261 64L247 75L261 86Z" />
        <S w={3} d="M236 64V74M244 64V74" />
      </>
    ),
  },
  { group: "Lauflinie" },
  {
    label: "Lauflinienabstand",
    min: { on: true, value: "0,300" },
    icon: (
      <>
        <Fan x={162} y={12} />
        <S c={BLUE} w={5} d="M178 81V27H233" />
        <S d="M237 13H262M237 27H262" dash="5 4" />
        <Squeeze x={272} y={3} />
      </>
    ),
  },
  {
    label: "Lauflinie an Podest",
    text: "Gewinkelt",
    icon: (
      <>
        <Corner x={162} y={13} />
        <S c={BLUE} w={5} d="M181 82V32H233" />
      </>
    ),
  },
  {
    label: "Verjüngte Trittstufenbreite",
    min: { on: true, value: "0,100" },
    icon: (
      <>
        <Fan x={162} y={12} c="#b4babc" />
        <S d="M162 28L199 50V66H162V28M162 48L199 66" />
        <S d="M212 58H258M212 68H258" dash="5 4" />
        <Squeeze x={272} y={48} />
      </>
    ),
  },
  { group: "Kopffreiheit" },
  {
    label: "Methode",
    text: "Vertikal",
    icon: (
      <>
        <HeadLine />
        <Stairs />
        <circle cx={208} cy={18} r={5} stroke={INK} strokeWidth={4} />
        <S d="M208 26Q196 26 196 44L203 40V62M208 26Q220 26 220 44L213 40V62M208 42V60" />
      </>
    ),
  },
  { label: "Kopffreiheit Höhe", value: "2,200", icon: <><HeadLine /><Stairs /><ArrowV x={263} y1={6} y2={64} /></> },
  {
    label: "Linker Abstand",
    value: "0,000",
    icon: (
      <>
        <Rungs />
        <S c={BLUE} w={5} d="M157 64H247" />
        <S c={BLUE} d="M157 33H247" dash="9 5" />
        <Squeeze x={262} y={5} />
      </>
    ),
  },
  {
    label: "Rechter Abstand",
    value: "0,000",
    icon: (
      <>
        <Rungs />
        <S c={BLUE} w={5} d="M157 18H247" />
        <Squeeze x={262} y={35} />
      </>
    ),
  },
];

const LimitCell = ({ word, lim, row }: { word: string; lim: Lim; row: string }) => (
  <Cell>
    <Limit>
      <Check type="checkbox" defaultChecked={lim.on} aria-label={`${row} ${word}`} />
      <LimitText>{word}</LimitText>
    </Limit>
    {lim.value}
  </Cell>
);

const RulesList = () => (
  <ListBox $h={557} $top={8}>
    <Clip>
      <Grid $row={32} $line={2}>
        <colgroup>
          <col width="90" />
          <col width="255" />
          <col width="172" />
          <col />
        </colgroup>
        <tbody>
          {rules.map((r) =>
            "group" in r ? (
              <Group key={r.group} $c="#ececec">
                <td><Toggle aria-label={r.group}><Triangle big /></Toggle></td>
                <th colSpan={3} scope="rowgroup">{r.group}</th>
              </Group>
            ) : (
              <tr key={r.label}>
                <td>
                  <IconSpot $left={31}><Icon x={150} y={0} w={47} h={30}>{r.icon}</Icon></IconSpot>
                </td>
                <th scope="row">{r.label}</th>
                {r.text ? (
                  <td colSpan={2}>{r.text}</td>
                ) : (
                  <>
                    <td>
                      {r.check && <Limit><Check type="checkbox" defaultChecked aria-label={r.label} /></Limit>}
                      {r.min && <LimitCell word="min" lim={r.min} row={r.label} />}
                      {r.value && <Indent>{r.value}</Indent>}
                    </td>
                    <td>
                      {r.max && <LimitCell word="max." lim={r.max} row={r.label} />}
                      {r.unit}
                    </td>
                  </>
                )}
              </tr>
            )
          )}
        </tbody>
      </Grid>
    </Clip>
    <Scroll thumb={477} />
  </ListBox>
);

const Picked = styled.tr`
  background: #0078d7;
  color: #fff;
`;

const ClassList = () => (
  <ListBox $h={69} $top={7}>
    <Clip>
      <Grid $row={30} $line={1}>
        <colgroup>
          <col width="90" />
          <col width="229" />
          <col />
        </colgroup>
        <tbody>
          <Group $c="#f2f2f2">
            <td />
            <th colSpan={2}>KLASSIFIZIERUNGEN</th>
          </Group>
          <Picked>
            <td><IconSpot $left={49}><Check type="checkbox" $light aria-label="ARCHICAD Klassifizierung - 23" /></IconSpot></td>
            <th scope="row">ARCHICAD Klassifizierung - 23</th>
            <td>(Nicht klassifiziert)</td>
          </Picked>
          <tr>
            <td><IconSpot $left={49}><Check type="checkbox" defaultChecked aria-label="Klassifizierung" /></IconSpot></td>
            <th />
            <td />
          </tr>
        </tbody>
      </Grid>
    </Clip>
    <Scroll />
  </ListBox>
);

const Pane = styled.div`
  flex: none;
  height: 8px;
  margin-top: 8px;
  background: #f7f7f7;
`;

const ND = "<Nicht definiert>";
type Prop = { group: string } | { label: string; value: string; link?: boolean; brick?: boolean };
const properties: Prop[] = [
  { group: "ID UND KATEGORIEN" },
  { label: "ID-Nr.", value: "Treppe-003" },
  { label: "Tragende Funktion", value: "Nicht tragende Elemente" },
  { label: "Lage", value: "Innen" },
  { group: "UMBAU" },
  { label: "Umbau-Status", value: "Bestand", brick: true },
  { label: "Anzeigen auf Umbau-Filter", value: "Alle relevanten Filter" },
  { group: "Allgemeine Werte" },
  ...[
    "Bauabschnitt",
    "Brandabschnitt",
    "Feuerwiderstandsklasse 4102-2",
    "Feuerwiderstandsklasse 13501-1",
    "Notausgang",
    "Bewehrungsgrad",
    "Expositionsklasse",
    "Druckfestigkeit",
    "Fertigungsart",
    "Sichtqualität",
  ].map((label) => ({ label, value: ND, link: true })),
];

const LinkIcon = () => (
  <Icon x={0} y={0} w={23} h={20}>
    <S d="M14 26H8Q3 26 3 21V9Q3 4 8 4H42Q47 4 47 9V20Q47 25 42 25H34" w={4} />
    <S d="M54 13H62Q67 13 67 18V30Q67 35 62 35H30Q25 35 25 30V19Q25 14 30 14H37" w={4} />
  </Icon>
);
const BrickIcon = () => (
  <Icon x={0} y={0} w={26} h={26}>
    <S
      w={4}
      d="M17 3H74V76H17ZM3 17H74M3 31H74M3 46H74M3 61H74M3 17V31H17M3 46V61H17M45 3V17M31 17V31M59 17V31M45 31V46M31 46V61M59 46V61M45 61V76"
    />
  </Icon>
);
const Spread = styled.div`
  display: flex;
  align-items: center;
  justify-content: space-between;
  height: 28px;
  padding-right: 30px;
`;

const PropertyList = () => (
  <ListBox $top={7}>
    <Clip>
      <Grid $row={30} $line={1}>
        <colgroup>
          <col width="90" />
          <col width="229" />
          <col />
        </colgroup>
        <tbody>
          {properties.map((p) =>
            "group" in p ? (
              <Group key={p.group} $c="#f2f2f2">
                <td><Toggle aria-label={p.group}><Triangle /></Toggle></td>
                <th colSpan={2} scope="rowgroup">{p.group}</th>
              </Group>
            ) : (
              <tr key={p.label}>
                <td>{p.link && <IconSpot $left={47}><LinkIcon /></IconSpot>}</td>
                <th scope="row">{p.label}</th>
                <td><Spread>{p.value}{p.brick && <BrickIcon />}</Spread></td>
              </tr>
            )
          )}
        </tbody>
      </Grid>
    </Clip>
    <Scroll thumb={232} />
  </ListBox>
);

const Footer = styled.footer`
  flex: none;
  margin: 18px 1px 0 0;
`;
const Actions = styled.div`
  display: flex;
  margin-top: 18px;
`;
const LayerButton = styled.button`
  display: flex;
  align-items: center;
  flex: 1;
  height: 33px;
  margin-left: 12px;
  padding: 0 5px 0 7px;
  border: 1px solid #a9a9a9;
  background: #e1e1e1;
`;
const LayerName = styled.span`
  flex: 1;
  margin-left: 4px;
  text-align: left;
`;
const Push = styled.button<{ $main?: boolean; $gap: number }>`
  width: 133px;
  height: 33px;
  margin-left: ${(p) => p.$gap}px;
  padding: 0;
  border: ${(p) => (p.$main ? "2px solid #0078d7" : "1px solid #a9a9a9")};
  background: #e1e1e1;
`;
const Grip = styled.svg`
  position: absolute;
  right: 3px;
  bottom: 3px;
  width: 12px;
  height: 12px;
`;

const TreeIcon = ({ kind }: { kind: string }) => (
  <Icon x={0} y={0} w={27} h={27}>
    {kind === "stairs" &&
      [0, 1, 2, 3].map((i) => (
        <S
          key={i}
          w={4}
          fill="#5d6a70"
          d={`M${2 + i * 8} ${18 + i * 12}Q${16 + i * 8} ${13 + i * 12} ${32 + i * 8} ${12 + i * 12}L${42 + i * 8} ${19 + i * 12}Q${26 + i * 8} ${19 + i * 12} ${13 + i * 8} ${26 + i * 12}Z`}
        />
      ))}
    {(kind === "structure" || kind === "flight") && (
      <>
        <S c={GREY} d="M4 24L16 4L32 8V20L44 22V36L56 38V50L70 54M32 8L20 26V36L32 38V50L46 54V64L58 66L70 54" />
        <S w={5} d="M4 24V50L42 78L58 76L70 62V54M58 66V76" />
      </>
    )}
    {kind === "landing" && (
      <>
        <S c={GREY} d="M4 42L22 22L74 26M4 42L56 46L74 26" />
        <S w={5} d="M4 40V56L54 62L74 40V26M56 46L54 62" />
      </>
    )}
    {kind === "cover" && (
      <>
        <S w={5} d="M4 24L18 4L32 8L18 30ZM20 36L32 20L46 24L34 44ZM34 52L46 34L60 38L48 60ZM54 74V60L68 46V60Z" />
        <S w={5} d="M18 30V36M32 8V20M34 44V52M46 24V34M60 38L68 46M48 60H54" />
      </>
    )}
    {kind === "tread" && (
      <S w={5} d="M4 28L16 8H34L22 28ZM24 46L36 26H54L42 46ZM44 64L56 44H74L62 64Z" />
    )}
    {kind === "riser" && (
      <S w={4} d="M10 30L24 4V26L10 50ZM28 48L42 22V44L28 68ZM46 66L60 40V62L46 84Z" />
    )}
    {kind === "plan" && (
      <S w={5} d="M5 12H14V68H5ZM5 40H28M18 12L32 68H18ZM36 12H72V68H62L36 12M50 12V40M62 12V68M50 30H72M60 48H72" />
    )}
    {kind === "ceiling" && <S w={5} d="M5 16H72V64H5ZM5 40H72M58 16L72 30M58 64L72 48" />}
  </Icon>
);

const tree: { label: string; level: number; kind: string; caret?: "open" | "closed" }[] = [
  { label: "Treppen", level: 0, kind: "stairs", caret: "open" },
  { label: "Struktur", level: 1, kind: "structure", caret: "open" },
  { label: "Lauf - Massiv", level: 2, kind: "flight" },
  { label: "Podest - Massiv", level: 2, kind: "landing" },
  { label: "Bekleidung", level: 1, kind: "cover", caret: "open" },
  { label: "Trittstufe", level: 2, kind: "tread" },
  { label: "Setzstufe", level: 2, kind: "riser" },
  { label: "Grundrissdarstellung", level: 1, kind: "plan", caret: "closed" },
  { label: "Deckenspiegel Darstellung", level: 1, kind: "ceiling", caret: "closed" },
];

const HeaderIcon = ({ children }: { children: React.ReactNode }) => (
  <Icon x={51} y={0} w={67} h={33}>
    <F c="#404040" d="M81 39H111L96 57Z" />
    {children}
  </Icon>
);

const App = () => (
  <Desktop>
    <Global />
    <Shell />
    <Dialog role="dialog" aria-labelledby="dialog-title">
      <TitleBar>
        <Glyph $w={22} $h={22} viewBox="0 0 22 22">
          <rect x="1" y="0" width="20" height="21" rx="3" fill="#3563cf" />
          <path d="M1 21V17Q8 2 13 3L6 18Z" fill="#9dbcf5" fillOpacity=".5" />
          <path d="M1 19Q7 3 12 3Q17 4 18 13" stroke="#fff" strokeWidth="2.200" />
        </Glyph>
        <Title id="dialog-title">Einstellungen für die Treppen-Auswahl</Title>
        <TitleButton aria-label="Hilfe">?</TitleButton>
        <TitleButton aria-label="Schließen">
          <Glyph $w={18} $h={18} viewBox="0 0 18 18">
            <path d="M1 1L17 17M17 1L1 17" stroke="#000" strokeWidth="1.200" />
          </Glyph>
        </TitleButton>
      </TitleBar>
      <DialogTop>
        <FavButton aria-label="Favoriten">
          <Icon x={0} y={0} w={56} h={34}>
            <S
              w={5}
              d="M70 15L78 40H104L84 56L91 83L70 67L49 83L56 56L36 40H62Z"
            />
            <Right x={142} y={51} />
          </Icon>
        </FavButton>
        <Counts>
          Ausgewählte Treppe: 1<br />
          Bearbeitbar: 1
        </Counts>
      </DialogTop>
      <Body>
        <TreePane aria-label="Seiten">
          <Tree>
            {tree.map((t) => (
              <TreeRow key={t.label} $level={t.level} $on={t.level === 0}>
                <Caret>
                  {t.caret === "open" && (
                    <Glyph $w={15} $h={10} viewBox="0 0 15 10">
                      <path d="M1 1L7.500 8L14 1" stroke="#404040" strokeWidth="2.800" />
                    </Glyph>
                  )}
                  {t.caret === "closed" && (
                    <Glyph $w={15} $h={14} viewBox="0 0 15 14">
                      <path d="M5 1L11 7L5 13" stroke="#a5a5a5" strokeWidth="2.800" />
                    </Glyph>
                  )}
                </Caret>
                <TreeIcon kind={t.kind} />
                <TreeLabel>{t.label}</TreeLabel>
              </TreeRow>
            ))}
          </Tree>
          <HScroll>
            <HScrollButton aria-label="Nach links">
              <Glyph $w={10} $h={12} viewBox="0 0 10 12"><path d="M8 1L3 6L8 11" stroke="#606060" strokeWidth="2.600" /></Glyph>
            </HScrollButton>
            <HThumb />
            <HScrollButton aria-label="Nach rechts">
              <Glyph $w={10} $h={12} viewBox="0 0 10 12"><path d="M2 1L7 6L2 11" stroke="#606060" strokeWidth="2.600" /></Glyph>
            </HScrollButton>
          </HScroll>
        </TreePane>
        <Splitter />
        <Panel>
          <Section>
            <HeaderIcon>
              <S d="M163 20H200V60H163ZM163 20L154 12H190L200 20M154 12V50L163 60M151 68H195L210 81H164Z" />
              <ArrowV x={224} y1={18} y2={63} />
            </HeaderIcon>
            Geometrie und Positionierung
          </Section>
          <GeometryPanel />
          <Section>
            <HeaderIcon>
              <S d="M148 14L165 11H190L184 19L160 23ZM160 23L168 33L198 26L186 19M168 33L176 44L206 38L198 26M176 44L184 56" />
              <rect x={190} y={42} width={37} height={45} rx={3} fill="#d5d5d5" stroke={INK} strokeWidth={5} />
              <text x={208} y={75} fontSize={34} fontWeight={700} textAnchor="middle" fill={BLUE}>§</text>
            </HeaderIcon>
            Regeln &amp; Standards
          </Section>
          <RulesList />
          <Section $top={7}>
            <HeaderIcon>
              <rect x={163} y={13} width={52} height={64} rx={4} stroke={INK} strokeWidth={5} />
              <S d="M172 22H196M172 31H190M172 40H204M172 49H196M172 58H204M172 67H204" />
            </HeaderIcon>
            Klassifizierung und Eigenschaften
          </Section>
          <ClassList />
          <Pane />
          <PropertyList />
          <Footer>
            <Line />
            <Actions>
              <Icon x={0} y={0} w={42} h={33}>
                <S w={5} d="M32 14H118L92 50H8ZM16 46L8 58L14 62H92L118 28M12 62L8 70L14 74H92L118 40M12 74L14 84H92L118 52" />
                <S d="M44 24H66L58 38H36ZM82 24L72 38M94 24L84 38M106 24L96 38" />
              </Icon>
              <LayerButton>
                <Icon x={0} y={0} w={24} h={18}>
                  <S w={5} d="M2 27Q36-12 70 27Q36 64 2 27Z" />
                  <circle cx={36} cy={27} r={11} stroke={INK} strokeWidth={5} />
                </Icon>
                <LayerName>40 Treppe</LayerName>
                <Icon x={0} y={0} w={7} h={10}><Right x={0} y={15} /></Icon>
              </LayerButton>
              <Push $gap={24}>Abbrechen</Push>
              <Push $gap={17} $main>OK</Push>
            </Actions>
          </Footer>
        </Panel>
      </Body>
      <Grip viewBox="0 0 12 12" aria-hidden="true">
        <path d="M9 0h3v3H9zM4.500 4.500h3v3h-3zM9 4.500h3v3H9zM0 9h3v3H0zM4.500 9h3v3h-3zM9 9h3v3H9z" fill="#b5b5b5" />
      </Grip>
    </Dialog>
  </Desktop>
);

export default App;
